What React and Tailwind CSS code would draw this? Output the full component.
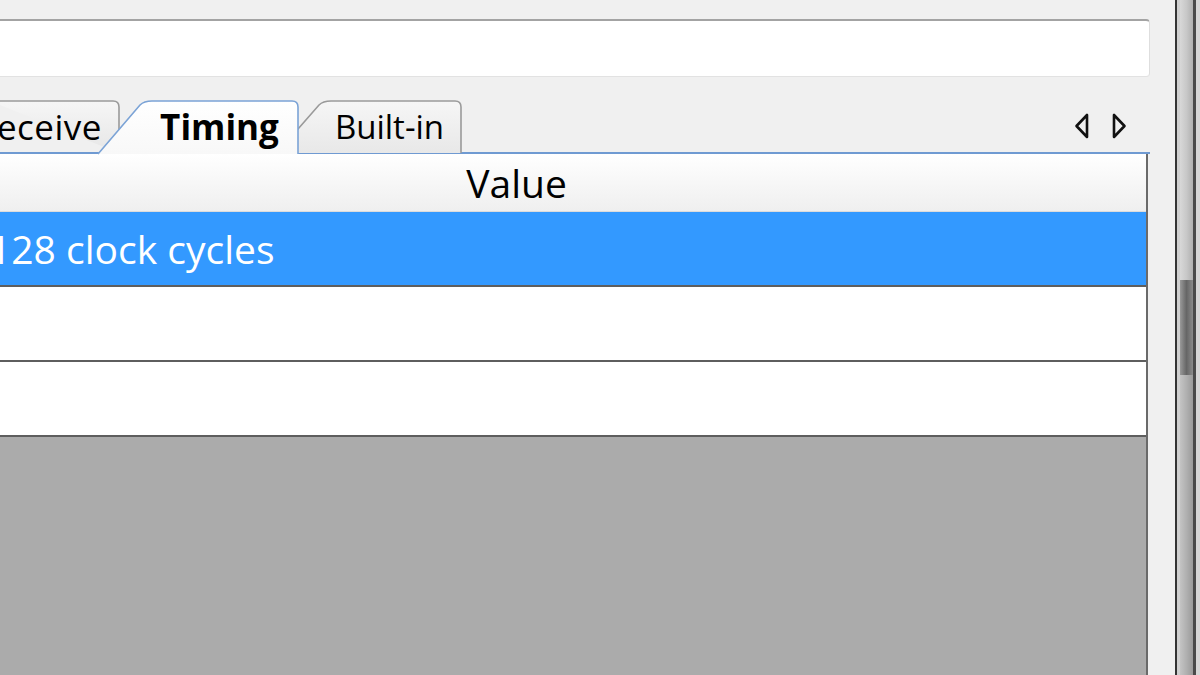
const font = { fontFamily: '"Open Sans", "Noto Sans", sans-serif' }

const TabShape = ({ d, fill, stroke, id }) => (
  <svg className="absolute inset-0 h-full w-full overflow-visible" preserveAspectRatio="none">
    <defs>
      <linearGradient id={id} x1="0" y1="0" x2="0" y2="1">
        <stop offset="0" stopColor={fill[0]} />
        <stop offset="1" stopColor={fill[1]} />
      </linearGradient>
    </defs>
    <path d={d} fill={`url(#${id})`} stroke={stroke} strokeWidth="1.6" />
  </svg>
)

const Arrow = ({ dir }) => (
  <svg width="16" height="26" viewBox="0 0 16 26">
    {dir === 'left' ? (
      <path d="M13 2 L13 24 L2.5 13 Z" fill="none" stroke="#111" strokeWidth="2.6" strokeLinejoin="round" />
    ) : (
      <path d="M3 2 L3 24 L13.5 13 Z" fill="none" stroke="#111" strokeWidth="2.6" strokeLinejoin="round" />
    )}
  </svg>
)

export default function App() {
  const rows = ['128 clock cycles', '', '']

  return (
    <div className="flex h-[675px] w-[1200px] overflow-hidden bg-[#f0f0f0] text-black" style={font}>
      {/* main area */}
      <div className="flex w-[1175px] flex-col">
        <div className="h-[19px]" />
        {/* text field */}
        <div className="h-[58px] w-[1150px] rounded-r-[4px] border-t-2 border-r border-b border-t-[#a3a3a3] border-r-[#dedede] border-b-[#e2e2e2] bg-white" />

        {/* tab strip */}
        <div className="mt-[23px] flex h-[52px] w-[1150px] items-end">
          <div className="relative flex h-[52px] w-[120px] items-center justify-end overflow-hidden pr-[18px]">
            <TabShape id="g1" d="M-10 1 L113 1 Q119 1 119 7 L119 53" fill={['#f6f6f6', '#e6e6e6']} stroke="#9a9a9a" />
            <span className="relative text-[35px] leading-none tracking-[0.5px]">Receive</span>
          </div>
          <div className="relative z-10 -mb-[2px] -ml-[22px] flex h-[54px] w-[201px] items-center justify-center pl-[42px] pb-[2px]">
            <TabShape id="g2" d="M0 54 L42 5 Q46 1 54 1 L194 1 Q200 1 200 7 L200 54" fill={['#ffffff', '#f8f8f8']} stroke="#7ba3d6" />
            <span className="relative text-[35px] font-bold leading-none">Timing</span>
          </div>
          <div className="relative -ml-[22px] flex h-[52px] w-[185px] items-center justify-center pl-[40px]">
            <TabShape id="g3" d="M0 53 L42 5 Q46 1 54 1 L178 1 Q184 1 184 7 L184 53" fill={['#f6f6f6', '#e8e8e8']} stroke="#9a9a9a" />
            <span className="relative text-[33px] leading-none">Built-in</span>
          </div>
          <div className="flex flex-1 items-center justify-end gap-[21px] self-stretch pr-[23px]">
            <Arrow dir="left" />
            <Arrow dir="right" />
          </div>
        </div>

        {/* tab panel */}
        <div className="flex w-[1150px] flex-1 flex-col border-t-2 border-[#6f9ad2]">
          <div className="flex w-[1148px] flex-1 flex-col border-r-2 border-[#6a6a6a]">
            <div className="flex h-[58px] items-center justify-center border-b border-[#dcdcdc] bg-gradient-to-b from-white to-[#efefef] pr-[113px]">
              <span className="text-[39px] leading-none">Value</span>
            </div>
            {rows.map((r, i) => (
              <div
                key={i}
                className={`flex h-[75px] items-center border-b-2 border-[#5e5e5e] ${i === 0 ? 'bg-[#3399ff] text-white' : 'bg-white'}`}
              >
                <span className="-ml-[11px] text-[39px] leading-none">{r}</span>
              </div>
            ))}
            <div className="flex-1 bg-[#ababab]" />
          </div>
        </div>
      </div>

      {/* right edge / scrollbar */}
      <div className="w-[2px] bg-[#333333]" />
      <div className="w-[3px] bg-[#cfcfcf]" />
      <div className="flex w-[13px] flex-col bg-gradient-to-r from-[#c4c4c4] via-[#b0b0b0] to-[#9a9a9a]">
        <div className="h-[280px] bg-gradient-to-r from-[#d8d8d8] via-[#c8c8c8] to-[#b0b0b0]" />
        <div className="h-[95px] bg-gradient-to-r from-[#9a9a9a] via-[#666666] to-[#8a8a8a]" />
      </div>
      <div className="w-[3px] bg-[#4a4a4a]" />
      <div className="flex-1 bg-[#d6d6d6]" />
    </div>
  )
}
